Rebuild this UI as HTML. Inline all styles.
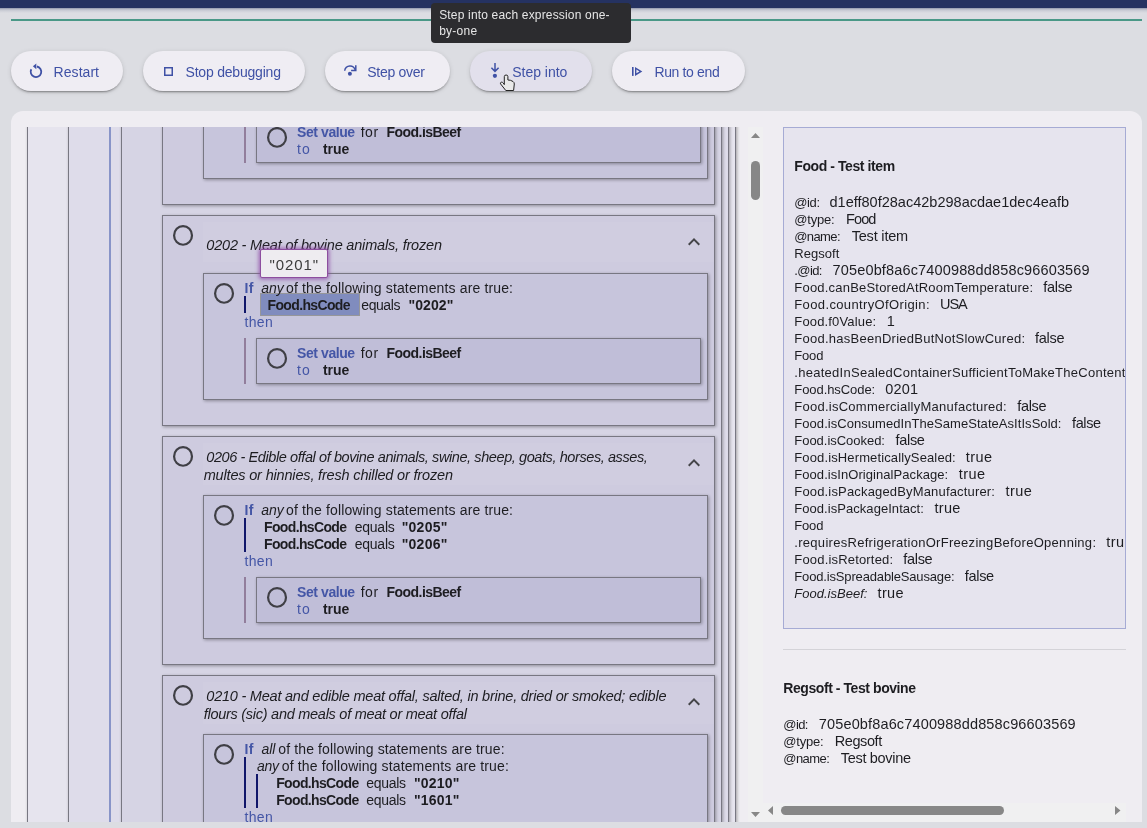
<!DOCTYPE html>
<html><head><meta charset="utf-8"><title>Debugger</title>
<style>
html,body{margin:0;padding:0}
body{width:1147px;height:828px;overflow:hidden;background:#dcdde2;font-family:"Liberation Sans",sans-serif;position:relative;color:#1d1d21}
.t{position:absolute;white-space:pre;line-height:17px;display:block}
.a{position:absolute;box-sizing:border-box}
.bx{position:absolute;box-sizing:border-box;border:1px solid #787782;box-shadow:1px 1px 3px rgba(0,0,0,.33)}
.btn{position:absolute;box-sizing:border-box;top:51px;height:40px;border-radius:20px;background:#efedf3;box-shadow:0 3px 1px -2px rgba(0,0,0,.2),0 2px 2px 0 rgba(0,0,0,.14),0 1px 5px 0 rgba(0,0,0,.12)}
.rad{position:absolute;box-sizing:border-box;width:20px;height:20px;border-radius:50%;border:2px solid #444448}
.clip{position:absolute;left:0;top:0;width:1147px;height:828px}
svg{position:absolute;overflow:visible}
</style></head><body>
<div id="w" style="position:absolute;left:0;top:0;width:1147px;height:828px;will-change:transform">

<div class="a" style="left:0;top:0;width:1147px;height:8px;background:#253261"></div>
<div class="a" style="left:0;top:8px;width:1147px;height:5px;background:linear-gradient(rgba(37,50,97,.42),rgba(37,50,97,.2) 25%,rgba(37,50,97,.08) 55%,rgba(37,50,97,0))"></div>
<div class="a" style="left:11px;top:19px;width:1131px;height:2px;background:#4a9887"></div>
<div class="btn" style="left:11px;width:112px;background:#efedf3"></div>
<div class="btn" style="left:143px;width:162px;background:#efedf3"></div>
<div class="btn" style="left:325px;width:125px;background:#efedf3"></div>
<div class="btn" style="left:470px;width:122px;background:#e2e0ec"></div>
<div class="btn" style="left:612px;width:133px;background:#efedf3"></div>
<svg style="left:0;top:0" width="1147" height="100" viewBox="0 0 1147 100"><path d="M36.9,66.5 A5.3,5.3 0 1 1 31.3,69.2" fill="none" stroke="#3f51a5" stroke-width="1.8"/><path d="M32.9,66.3 L36.3,63.4 L36.3,69.2 Z" fill="#3f51a5"/><rect x="164.75" y="67.75" width="7.5" height="7.5" fill="none" stroke="#3f51a5" stroke-width="1.5"/><path d="M344.7,70.8 A5.35,5.35 0 0 1 355.3,70.3" fill="none" stroke="#3f51a5" stroke-width="1.5"/><path d="M355.8,65.2 V70.6 H351.1" fill="none" stroke="#3f51a5" stroke-width="1.5"/><circle cx="349.9" cy="73.8" r="2" fill="#3f51a5"/><path d="M495,63 V71 M491.4,67.8 L495,71.4 L498.6,67.8" fill="none" stroke="#3f51a5" stroke-width="1.5"/><circle cx="494.9" cy="75.8" r="2.1" fill="#3f51a5"/><rect x="632" y="67" width="1.6" height="8.9" fill="#3f51a5"/><path d="M635,67 L642.3,71.45 L635,75.9 Z M636.4,69.6 L636.4,73.3 L639.5,71.45 Z" fill="#3f51a5" fill-rule="evenodd"/></svg>
<div class="a" style="left:431px;top:3px;width:200px;height:40px;border-radius:4px;background:#2c2c2f"></div>
<span class="t" style="left:53.60px;top:63.80px;font-size:14px;color:#3f51a5;letter-spacing:0.046px;">Restart</span>
<span class="t" style="left:185.50px;top:63.80px;font-size:14px;color:#3f51a5;letter-spacing:-0.200px;">Stop debugging</span>
<span class="t" style="left:367.20px;top:63.80px;font-size:14px;color:#3f51a5;letter-spacing:-0.267px;">Step over</span>
<span class="t" style="left:512.30px;top:63.80px;font-size:14px;color:#3f51a5;letter-spacing:-0.033px;">Step into</span>
<span class="t" style="left:654.40px;top:63.80px;font-size:14px;color:#3f51a5;letter-spacing:-0.356px;">Run to end</span>
<span class="t" style="left:439.20px;top:6.80px;font-size:12px;color:#e6e6e6;letter-spacing:0.171px;">Step into each expression one-</span>
<span class="t" style="left:439.20px;top:22.80px;font-size:12px;color:#e6e6e6;letter-spacing:0.239px;">by-one</span>
<svg style="left:0;top:0" width="1147" height="100" viewBox="0 0 1147 100"><path d="M504.3,76.6 Q504.3,75 506.1,75 Q507.9,75 507.9,76.6 L507.9,80 L510.5,80.3 L513,81.5 Q514.3,82.3 514.3,84 L513.6,90.5 L505.8,90.5 L500.5,83.8 Q500,82.6 501.3,82.2 Q502.5,82 503.2,83 L504.3,84.6 Z" fill="#e9e9e9" stroke="#222" stroke-width="1" stroke-linejoin="round"/></svg>
<div class="a" style="left:11px;top:111px;width:1131px;height:711px;border-radius:12px 12px 0 0;background:#efedf2"></div>
<div class="clip" style="clip-path:polygon(11px 127px,748px 127px,748px 822px,11px 822px)">
<div class="bx" style="left:27px;top:60px;width:709px;height:900px;background:#e6e4ee"></div>
<div class="bx" style="left:68px;top:60px;width:661px;height:900px;background:#dedcea"></div>
<div class="a" style="left:109px;top:60px;width:2px;height:900px;background:#8894c8"></div>
<div class="bx" style="left:121px;top:60px;width:601px;height:900px;background:#d6d4e4"></div>
<div class="bx" style="left:162px;top:20px;width:553px;height:185px;background:#cecbdf"></div>
<div class="bx" style="left:203px;top:60px;width:505px;height:119px;background:#c7c5dc"></div>
<div class="a" style="left:244px;top:117px;width:2px;height:46px;background:#927e9c"></div>
<div class="bx" style="left:256px;top:117px;width:445px;height:46px;background:#c0bed8"></div>
<div class="bx" style="left:162px;top:215px;width:553px;height:211px;background:#cecbdf"></div>
<div class="a" style="left:203px;top:222px;width:511px;height:40px;background:rgba(255,255,255,.045)"></div>
<svg style="left:682px;top:230.3px" width="24" height="24" viewBox="0 0 24 24"><path fill="#444448" d="M7.41,15.41L12,10.83L16.59,15.41L18,14L12,8L6,14L7.41,15.41Z"/></svg>
<div class="bx" style="left:203px;top:273px;width:505px;height:127px;background:#c7c5dc"></div>
<div class="a" style="left:260px;top:293px;width:100px;height:23px;background:#808cbe;border:1px solid #969699"></div>
<div class="a" style="left:244px;top:296px;width:2px;height:17px;background:#10166a"></div>
<div class="a" style="left:244px;top:338px;width:2px;height:46px;background:#927e9c"></div>
<div class="bx" style="left:256px;top:338px;width:445px;height:46px;background:#c0bed8"></div>
<div class="bx" style="left:162px;top:436px;width:553px;height:229px;background:#cecbdf"></div>
<div class="a" style="left:203px;top:443px;width:511px;height:42px;background:rgba(255,255,255,.045)"></div>
<svg style="left:682px;top:450.7px" width="24" height="24" viewBox="0 0 24 24"><path fill="#444448" d="M7.41,15.41L12,10.83L16.59,15.41L18,14L12,8L6,14L7.41,15.41Z"/></svg>
<div class="bx" style="left:203px;top:495px;width:505px;height:144px;background:#c7c5dc"></div>
<div class="a" style="left:244px;top:518px;width:2px;height:34px;background:#10166a"></div>
<div class="a" style="left:244px;top:577px;width:2px;height:46px;background:#927e9c"></div>
<div class="bx" style="left:256px;top:577px;width:445px;height:46px;background:#c0bed8"></div>
<div class="bx" style="left:162px;top:675px;width:553px;height:225px;background:#cecbdf"></div>
<div class="a" style="left:203px;top:681.5px;width:511px;height:42px;background:rgba(255,255,255,.045)"></div>
<svg style="left:682px;top:689.8px" width="24" height="24" viewBox="0 0 24 24"><path fill="#444448" d="M7.41,15.41L12,10.83L16.59,15.41L18,14L12,8L6,14L7.41,15.41Z"/></svg>
<div class="bx" style="left:203px;top:734px;width:505px;height:166px;background:#c7c5dc"></div>
<div class="a" style="left:244px;top:757px;width:2px;height:51px;background:#10166a"></div>
<div class="a" style="left:256px;top:774px;width:2px;height:34px;background:#10166a"></div>
<svg style="left:0;top:0" width="760" height="828" viewBox="0 0 760 828"><ellipse cx="277.04" cy="137.40" rx="8.95" ry="9.35" fill="none" stroke="#3f3f45" stroke-width="2.2"/><ellipse cx="183.04" cy="235.40" rx="8.95" ry="9.35" fill="none" stroke="#3f3f45" stroke-width="2.2"/><ellipse cx="224.04" cy="293.40" rx="8.95" ry="9.35" fill="none" stroke="#3f3f45" stroke-width="2.2"/><ellipse cx="277.04" cy="358.40" rx="8.95" ry="9.35" fill="none" stroke="#3f3f45" stroke-width="2.2"/><ellipse cx="183.04" cy="456.40" rx="8.95" ry="9.35" fill="none" stroke="#3f3f45" stroke-width="2.2"/><ellipse cx="224.04" cy="515.40" rx="8.95" ry="9.35" fill="none" stroke="#3f3f45" stroke-width="2.2"/><ellipse cx="277.04" cy="597.40" rx="8.95" ry="9.35" fill="none" stroke="#3f3f45" stroke-width="2.2"/><ellipse cx="183.04" cy="695.40" rx="8.95" ry="9.35" fill="none" stroke="#3f3f45" stroke-width="2.2"/><ellipse cx="224.04" cy="754.40" rx="8.95" ry="9.35" fill="none" stroke="#3f3f45" stroke-width="2.2"/></svg>
<span class="t" style="left:297.10px;top:123.80px;font-size:14px;color:#4456a6;font-weight:bold;letter-spacing:-0.436px;">Set value</span>
<span class="t" style="left:360.70px;top:123.80px;font-size:14px;color:#1d1d21;letter-spacing:0.528px;">for</span>
<span class="t" style="left:386.50px;top:123.80px;font-size:14px;color:#1d1d21;font-weight:bold;letter-spacing:-0.543px;">Food.isBeef</span>
<span class="t" style="left:297.10px;top:140.80px;font-size:14px;color:#4456a6;letter-spacing:0.912px;">to</span>
<span class="t" style="left:322.90px;top:140.80px;font-size:14px;color:#1d1d21;font-weight:bold;letter-spacing:-0.051px;">true</span>
<span class="t" style="left:206.30px;top:236.80px;font-size:14.5px;color:#1d1d21;font-style:italic;letter-spacing:-0.192px;">0202 - Meat of bovine animals, frozen</span>
<span class="t" style="left:244.40px;top:279.80px;font-size:14px;color:#4456a6;font-weight:bold;letter-spacing:0.537px;">If</span>
<span class="t" style="left:261.20px;top:279.80px;font-size:14px;color:#1d1d21;font-style:italic;letter-spacing:0.011px;">any</span>
<span class="t" style="left:286.00px;top:279.80px;font-size:14px;color:#1d1d21;letter-spacing:0.145px;">of the following statements are true:</span>
<span class="t" style="left:267.50px;top:296.80px;font-size:14px;color:#1d1d21;font-weight:bold;letter-spacing:-0.644px;">Food.hsCode</span>
<span class="t" style="left:361.30px;top:296.80px;font-size:14px;color:#1d1d21;letter-spacing:-0.433px;">equals</span>
<span class="t" style="left:408.40px;top:296.80px;font-size:14px;color:#1d1d21;font-weight:bold;letter-spacing:0.116px;">&quot;0202&quot;</span>
<span class="t" style="left:244.40px;top:313.80px;font-size:14px;color:#4456a6;letter-spacing:0.383px;">then</span>
<span class="t" style="left:297.10px;top:344.80px;font-size:14px;color:#4456a6;font-weight:bold;letter-spacing:-0.436px;">Set value</span>
<span class="t" style="left:360.70px;top:344.80px;font-size:14px;color:#1d1d21;letter-spacing:0.528px;">for</span>
<span class="t" style="left:386.50px;top:344.80px;font-size:14px;color:#1d1d21;font-weight:bold;letter-spacing:-0.543px;">Food.isBeef</span>
<span class="t" style="left:297.10px;top:361.80px;font-size:14px;color:#4456a6;letter-spacing:0.912px;">to</span>
<span class="t" style="left:322.90px;top:361.80px;font-size:14px;color:#1d1d21;font-weight:bold;letter-spacing:-0.051px;">true</span>
<span class="t" style="left:206.30px;top:448.80px;font-size:14.5px;color:#1d1d21;font-style:italic;letter-spacing:-0.411px;">0206 - Edible offal of bovine animals, swine, sheep, goats, horses, asses,</span>
<span class="t" style="left:203.70px;top:466.80px;font-size:14.5px;color:#1d1d21;font-style:italic;letter-spacing:-0.171px;">multes or hinnies, fresh chilled or frozen</span>
<span class="t" style="left:244.40px;top:501.80px;font-size:14px;color:#4456a6;font-weight:bold;letter-spacing:0.537px;">If</span>
<span class="t" style="left:261.20px;top:501.80px;font-size:14px;color:#1d1d21;font-style:italic;letter-spacing:0.011px;">any</span>
<span class="t" style="left:286.00px;top:501.80px;font-size:14px;color:#1d1d21;letter-spacing:0.145px;">of the following statements are true:</span>
<span class="t" style="left:264.00px;top:518.80px;font-size:14px;color:#1d1d21;font-weight:bold;letter-spacing:-0.644px;">Food.hsCode</span>
<span class="t" style="left:354.70px;top:518.80px;font-size:14px;color:#1d1d21;letter-spacing:-0.233px;">equals</span>
<span class="t" style="left:401.70px;top:518.80px;font-size:14px;color:#1d1d21;font-weight:bold;letter-spacing:0.256px;">&quot;0205&quot;</span>
<span class="t" style="left:264.00px;top:535.80px;font-size:14px;color:#1d1d21;font-weight:bold;letter-spacing:-0.644px;">Food.hsCode</span>
<span class="t" style="left:354.70px;top:535.80px;font-size:14px;color:#1d1d21;letter-spacing:-0.233px;">equals</span>
<span class="t" style="left:401.70px;top:535.80px;font-size:14px;color:#1d1d21;font-weight:bold;letter-spacing:0.256px;">&quot;0206&quot;</span>
<span class="t" style="left:244.40px;top:552.80px;font-size:14px;color:#4456a6;letter-spacing:0.383px;">then</span>
<span class="t" style="left:297.10px;top:583.80px;font-size:14px;color:#4456a6;font-weight:bold;letter-spacing:-0.436px;">Set value</span>
<span class="t" style="left:360.70px;top:583.80px;font-size:14px;color:#1d1d21;letter-spacing:0.528px;">for</span>
<span class="t" style="left:386.50px;top:583.80px;font-size:14px;color:#1d1d21;font-weight:bold;letter-spacing:-0.543px;">Food.isBeef</span>
<span class="t" style="left:297.10px;top:600.80px;font-size:14px;color:#4456a6;letter-spacing:0.912px;">to</span>
<span class="t" style="left:322.90px;top:600.80px;font-size:14px;color:#1d1d21;font-weight:bold;letter-spacing:-0.051px;">true</span>
<span class="t" style="left:206.30px;top:687.80px;font-size:14.5px;color:#1d1d21;font-style:italic;letter-spacing:-0.226px;">0210 - Meat and edible meat offal, salted, in brine, dried or smoked; edible</span>
<span class="t" style="left:203.70px;top:705.80px;font-size:14.5px;color:#1d1d21;font-style:italic;letter-spacing:-0.268px;">flours (sic) and meals of meat or meat offal</span>
<span class="t" style="left:244.40px;top:740.80px;font-size:14px;color:#4456a6;font-weight:bold;letter-spacing:0.537px;">If</span>
<span class="t" style="left:261.60px;top:740.80px;font-size:14px;color:#1d1d21;font-style:italic;letter-spacing:-0.058px;">all</span>
<span class="t" style="left:278.30px;top:740.80px;font-size:14px;color:#1d1d21;letter-spacing:0.125px;">of the following statements are true:</span>
<span class="t" style="left:257.00px;top:757.80px;font-size:14px;color:#1d1d21;font-style:italic;letter-spacing:-0.289px;">any</span>
<span class="t" style="left:281.80px;top:757.80px;font-size:14px;color:#1d1d21;letter-spacing:0.145px;">of the following statements are true:</span>
<span class="t" style="left:276.20px;top:774.80px;font-size:14px;color:#1d1d21;font-weight:bold;letter-spacing:-0.644px;">Food.hsCode</span>
<span class="t" style="left:366.20px;top:774.80px;font-size:14px;color:#1d1d21;letter-spacing:-0.293px;">equals</span>
<span class="t" style="left:414.00px;top:774.80px;font-size:14px;color:#1d1d21;font-weight:bold;letter-spacing:0.176px;">&quot;0210&quot;</span>
<span class="t" style="left:276.20px;top:791.80px;font-size:14px;color:#1d1d21;font-weight:bold;letter-spacing:-0.644px;">Food.hsCode</span>
<span class="t" style="left:366.20px;top:791.80px;font-size:14px;color:#1d1d21;letter-spacing:-0.293px;">equals</span>
<span class="t" style="left:414.00px;top:791.80px;font-size:14px;color:#1d1d21;font-weight:bold;letter-spacing:0.176px;">&quot;1601&quot;</span>
<span class="t" style="left:244.40px;top:808.80px;font-size:14px;color:#4456a6;letter-spacing:0.383px;">then</span>
<div class="a" style="left:260px;top:249px;width:68px;height:29px;border:1px solid #8d4e9f;border-radius:2px;background:#eeecf0;box-shadow:0 0 4px 1px rgba(140,70,165,.85)"></div>
<span class="t" style="left:269.60px;top:256.30px;font-size:15px;color:#3c3c3c;letter-spacing:0.894px;">&quot;0201&quot;</span>
</div>
<div class="a" style="left:748px;top:127px;width:15px;height:695px;background:#f0f0f1"></div>
<svg style="left:748px;top:127px" width="15" height="695" viewBox="0 0 15 695"><path fill="#878787" d="M3,11L7.5,6L12,11Z M3,685L7.5,690L12,685Z"/><rect x="3" y="34" width="9" height="39" rx="4.5" fill="#878787"/></svg>
<div class="a" style="left:763px;top:803px;width:363px;height:19px;background:#f0f0f1"></div>
<svg style="left:763px;top:803px" width="363" height="19" viewBox="0 0 363 19"><path fill="#878787" d="M10,3L5,7.5L10,12Z M352,3L357.5,7.5L352,12Z"/><rect x="18" y="3" width="223" height="9" rx="4.5" fill="#878787"/></svg>
<div class="clip" style="clip-path:polygon(765px 127px,1126px 127px,1126px 803px,765px 803px)">
<div class="a" style="left:783px;top:127px;width:343px;height:502px;border:1px solid #a6abd4;background:#e6e4ee"></div>
<span class="t" style="left:794.30px;top:157.80px;font-size:14px;color:#1d1d21;font-weight:bold;letter-spacing:-0.419px;">Food - Test item</span>
<span class="t" style="left:794.30px;top:194.30px;font-size:13px;color:#1d1d21;letter-spacing:-0.412px;">@id:</span>
<span class="t" style="left:829.50px;top:193.80px;font-size:14.5px;color:#1d1d21;letter-spacing:0.009px;">d1eff80f28ac42b298acdae1dec4eafb</span>
<span class="t" style="left:794.30px;top:211.30px;font-size:13px;color:#1d1d21;letter-spacing:-0.238px;">@type:</span>
<span class="t" style="left:846.00px;top:210.80px;font-size:14.5px;color:#1d1d21;letter-spacing:-0.888px;">Food</span>
<span class="t" style="left:794.30px;top:228.30px;font-size:13px;color:#1d1d21;letter-spacing:-0.626px;">@name:</span>
<span class="t" style="left:851.70px;top:227.80px;font-size:14.5px;color:#1d1d21;letter-spacing:-0.189px;">Test item</span>
<span class="t" style="left:794.30px;top:245.30px;font-size:13px;color:#1d1d21;letter-spacing:0.031px;">Regsoft</span>
<span class="t" style="left:794.30px;top:262.30px;font-size:13px;color:#1d1d21;letter-spacing:-0.612px;">.@id:</span>
<span class="t" style="left:832.60px;top:261.80px;font-size:14.5px;color:#1d1d21;letter-spacing:0.149px;">705e0bf8a6c7400988dd858c96603569</span>
<span class="t" style="left:794.30px;top:279.30px;font-size:13px;color:#1d1d21;letter-spacing:0.207px;">Food.canBeStoredAtRoomTemperature:</span>
<span class="t" style="left:1043.30px;top:278.80px;font-size:14.5px;color:#1d1d21;letter-spacing:-0.310px;">false</span>
<span class="t" style="left:794.30px;top:296.30px;font-size:13px;color:#1d1d21;letter-spacing:0.370px;">Food.countryOfOrigin:</span>
<span class="t" style="left:940.10px;top:295.80px;font-size:14.5px;color:#1d1d21;letter-spacing:-1.064px;">USA</span>
<span class="t" style="left:794.30px;top:313.30px;font-size:13px;color:#1d1d21;letter-spacing:0.160px;">Food.f0Value:</span>
<span class="t" style="left:886.70px;top:312.80px;font-size:14.5px;color:#1d1d21;">1</span>
<span class="t" style="left:794.30px;top:330.30px;font-size:13px;color:#1d1d21;letter-spacing:0.254px;">Food.hasBeenDriedButNotSlowCured:</span>
<span class="t" style="left:1035.10px;top:329.80px;font-size:14.5px;color:#1d1d21;letter-spacing:-0.285px;">false</span>
<span class="t" style="left:794.30px;top:347.30px;font-size:13px;color:#1d1d21;letter-spacing:-0.180px;">Food</span>
<span class="t" style="left:794.30px;top:364.30px;font-size:13px;color:#1d1d21;letter-spacing:0.274px;">.heatedInSealedContainerSufficientToMakeTheContentsCommerciallySterile:</span>
<span class="t" style="left:794.30px;top:381.30px;font-size:13px;color:#1d1d21;letter-spacing:-0.070px;">Food.hsCode:</span>
<span class="t" style="left:885.30px;top:380.80px;font-size:14.5px;color:#1d1d21;letter-spacing:0.178px;">0201</span>
<span class="t" style="left:794.30px;top:398.30px;font-size:13px;color:#1d1d21;letter-spacing:0.256px;">Food.isCommerciallyManufactured:</span>
<span class="t" style="left:1017.20px;top:397.80px;font-size:14.5px;color:#1d1d21;letter-spacing:-0.310px;">false</span>
<span class="t" style="left:794.30px;top:415.30px;font-size:13px;color:#1d1d21;letter-spacing:0.051px;">Food.isConsumedInTheSameStateAsItIsSold:</span>
<span class="t" style="left:1072.00px;top:414.80px;font-size:14.5px;color:#1d1d21;letter-spacing:-0.385px;">false</span>
<span class="t" style="left:794.30px;top:432.30px;font-size:13px;color:#1d1d21;letter-spacing:-0.028px;">Food.isCooked:</span>
<span class="t" style="left:895.50px;top:431.80px;font-size:14.5px;color:#1d1d21;letter-spacing:-0.310px;">false</span>
<span class="t" style="left:794.30px;top:449.30px;font-size:13px;color:#1d1d21;letter-spacing:0.127px;">Food.isHermeticallySealed:</span>
<span class="t" style="left:965.80px;top:448.80px;font-size:14.5px;color:#1d1d21;letter-spacing:0.467px;">true</span>
<span class="t" style="left:794.30px;top:466.30px;font-size:13px;color:#1d1d21;letter-spacing:0.059px;">Food.isInOriginalPackage:</span>
<span class="t" style="left:958.70px;top:465.80px;font-size:14.5px;color:#1d1d21;letter-spacing:0.467px;">true</span>
<span class="t" style="left:794.30px;top:483.30px;font-size:13px;color:#1d1d21;letter-spacing:0.165px;">Food.isPackagedByManufacturer:</span>
<span class="t" style="left:1005.40px;top:482.80px;font-size:14.5px;color:#1d1d21;letter-spacing:0.467px;">true</span>
<span class="t" style="left:794.30px;top:500.30px;font-size:13px;color:#1d1d21;letter-spacing:0.048px;">Food.isPackageIntact:</span>
<span class="t" style="left:934.40px;top:499.80px;font-size:14.5px;color:#1d1d21;letter-spacing:0.333px;">true</span>
<span class="t" style="left:794.30px;top:517.30px;font-size:13px;color:#1d1d21;letter-spacing:-0.180px;">Food</span>
<span class="t" style="left:794.30px;top:534.30px;font-size:13px;color:#1d1d21;letter-spacing:0.291px;">.requiresRefrigerationOrFreezingBeforeOpenning:</span>
<span class="t" style="left:1106.20px;top:533.80px;font-size:14.5px;color:#1d1d21;letter-spacing:0.467px;">true</span>
<span class="t" style="left:794.30px;top:551.30px;font-size:13px;color:#1d1d21;letter-spacing:0.179px;">Food.isRetorted:</span>
<span class="t" style="left:903.20px;top:550.80px;font-size:14.5px;color:#1d1d21;letter-spacing:-0.285px;">false</span>
<span class="t" style="left:794.30px;top:568.30px;font-size:13px;color:#1d1d21;letter-spacing:-0.157px;">Food.isSpreadableSausage:</span>
<span class="t" style="left:964.80px;top:567.80px;font-size:14.5px;color:#1d1d21;letter-spacing:-0.310px;">false</span>
<span class="t" style="left:794.30px;top:585.30px;font-size:13px;color:#1d1d21;font-style:italic;letter-spacing:0.009px;">Food.isBeef:</span>
<span class="t" style="left:877.50px;top:584.80px;font-size:14.5px;color:#1d1d21;letter-spacing:0.367px;">true</span>
<div class="a" style="left:1125px;top:127px;width:1px;height:502px;background:#a6abd4"></div><div class="a" style="left:1126px;top:127px;width:20px;height:502px;background:#efedf2"></div>
<div class="a" style="left:783px;top:649px;width:343px;height:1px;background:#d4d3d8"></div>
<span class="t" style="left:783.30px;top:679.80px;font-size:14px;color:#1d1d21;font-weight:bold;letter-spacing:-0.431px;">Regsoft - Test bovine</span>
<span class="t" style="left:783.30px;top:716.30px;font-size:13px;color:#1d1d21;letter-spacing:-0.579px;">@id:</span>
<span class="t" style="left:818.80px;top:715.80px;font-size:14.5px;color:#1d1d21;letter-spacing:0.145px;">705e0bf8a6c7400988dd858c96603569</span>
<span class="t" style="left:783.30px;top:733.30px;font-size:13px;color:#1d1d21;letter-spacing:-0.198px;">@type:</span>
<span class="t" style="left:834.70px;top:732.80px;font-size:14.5px;color:#1d1d21;letter-spacing:-0.397px;">Regsoft</span>
<span class="t" style="left:783.30px;top:750.30px;font-size:13px;color:#1d1d21;letter-spacing:-0.566px;">@name:</span>
<span class="t" style="left:840.80px;top:749.80px;font-size:14.5px;color:#1d1d21;letter-spacing:-0.316px;">Test bovine</span>
</div>
</div>
</body></html>
